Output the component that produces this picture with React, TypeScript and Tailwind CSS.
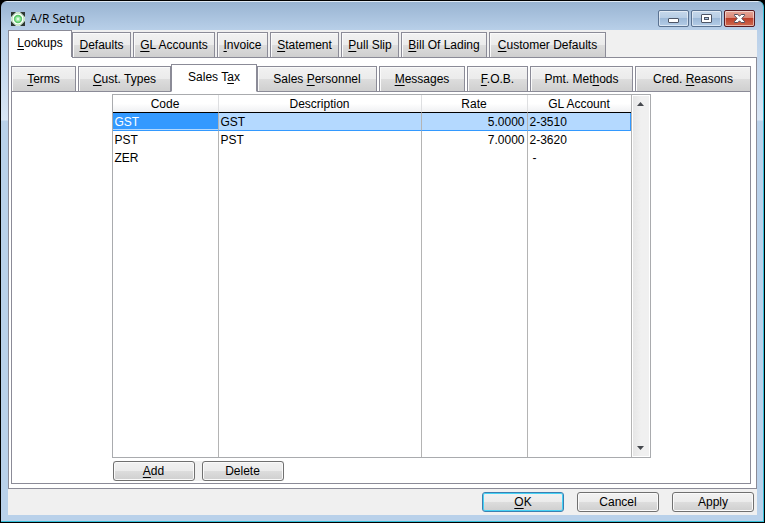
import { useState } from "react";
import type { ReactNode } from "react";
import clsx from "clsx";

interface Tab {
  label: string;
  hotkey: number;
  width: string;
}

interface TaxCode {
  code: string;
  description: string;
  rate: string;
  account: string;
}

const mainTabs: Tab[] = [
  { label: "Lookups", hotkey: 0, width: "w-[64px]" },
  { label: "Defaults", hotkey: 0, width: "w-[59px]" },
  { label: "GL Accounts", hotkey: 0, width: "w-[82px]" },
  { label: "Invoice", hotkey: 0, width: "w-[51px]" },
  { label: "Statement", hotkey: 0, width: "w-[69px]" },
  { label: "Pull Slip", hotkey: 0, width: "w-[58px]" },
  { label: "Bill Of Lading", hotkey: 0, width: "w-[86px]" },
  { label: "Customer Defaults", hotkey: 0, width: "w-[117px]" },
];

const lookupTabs: Tab[] = [
  { label: "Terms", hotkey: 0, width: "w-[65px]" },
  { label: "Cust. Types", hotkey: 0, width: "w-[93px]" },
  { label: "Sales Tax", hotkey: 7, width: "w-[86px]" },
  { label: "Sales Personnel", hotkey: 6, width: "w-[120px]" },
  { label: "Messages", hotkey: 0, width: "w-[86px]" },
  { label: "F.O.B.", hotkey: 0, width: "w-[61px]" },
  { label: "Pmt. Methods", hotkey: 8, width: "w-[103px]" },
  { label: "Cred. Reasons", hotkey: 6, width: "w-[116px]" },
];

const taxCodes: TaxCode[] = [
  { code: "GST", description: "GST", rate: "5.0000", account: "2-3510" },
  { code: "PST", description: "PST", rate: "7.0000", account: "2-3620" },
  { code: "ZER", description: "", rate: "", account: "-" },
];

const face = "bg-[linear-gradient(to_bottom,#f2f2f2,#ebebeb_50%,#dddddd_50%,#cfcfcf)]";

const Hotkey = ({ text, index }: { text: string; index: number }) => (
  <span className="whitespace-pre">
    {text.slice(0, index)}
    <span className="underline decoration-1 underline-offset-2">{text[index]}</span>
    {text.slice(index + 1)}
  </span>
);

interface TabStripProps {
  tabs: Tab[];
  active: number;
  onSelect: (index: number) => void;
  label: string;
}

const TabStrip = ({ tabs, active, onSelect, label }: TabStripProps) => (
  <div role="tablist" aria-label={label} className="flex h-7 items-end shadow-[inset_0_-1px_0_#8b8b97]">
    {tabs.map((tab, i) => (
      <button
        key={tab.label}
        type="button"
        role="tab"
        aria-selected={i === active}
        onClick={() => onSelect(i)}
        className={clsx(
          "shrink-0 border border-[#8b8b97] text-center",
          tab.width,
          i === active ? "h-7 border-b-white bg-white pb-[2px]" : "h-[26px] shadow-[inset_1px_1px_0_#fafafa]",
          i !== active && face,
          i !== active && i !== active - 1 && i < tabs.length - 1 && "mr-[2px]",
        )}
      >
        <Hotkey text={tab.label} index={tab.hotkey} />
      </button>
    ))}
  </div>
);

interface PushButtonProps {
  children: ReactNode;
  isDefault?: boolean;
}

const PushButton = ({ children, isDefault = false }: PushButtonProps) => (
  <button
    type="button"
    className={clsx(
      "h-5 w-[82px] rounded-[3px] border",
      face,
      isDefault
        ? "border-[#3c7fb1] shadow-[inset_0_0_0_1px_#46d2f5]"
        : "border-[#707070] shadow-[inset_0_0_0_1px_#fafafa]",
    )}
  >
    {children}
  </button>
);

const AppIcon = () => (
  <svg viewBox="0 0 16 16" className="size-4" aria-hidden="true">
    <rect x="1" y="1" width="14" height="14" fill="#dfeee0" />
    <path d="M1 6V1H6L1 6ZM10 1H15V6L10 1ZM1 10V15H6L1 10ZM15 10V15H10L15 10Z" fill="#2f3833" />
    <circle cx="8" cy="8" r="6" fill="#fff" stroke="#b5dcb8" strokeWidth="1" />
    <circle cx="8" cy="8" r="3.4" fill="#a8eab0" stroke="#5ccb6c" strokeWidth="1.6" />
    <circle cx="8" cy="8" r="1.2" fill="#e4fbe6" />
  </svg>
);

const captionButton =
  "flex h-[17px] w-[31px] items-center justify-center rounded-[2px] border shadow-[inset_0_0_0_1px_rgba(255,255,255,0.5)]";
const captionBlue =
  "border-[#5a7291] bg-[linear-gradient(to_bottom,#c6d8eb,#b6cce4_50%,#9db9d8_50%,#b4cde7)]";

const TitleBar = () => (
  <header className="flex h-[29px] items-center justify-between pt-[6px] pr-2 pl-[9px]">
    <div className="flex items-center gap-1">
      <AppIcon />
      <h1 className="font-['Open_Sans','Noto_Sans',sans-serif] text-xs text-black">A/R Setup</h1>
    </div>
    <div className="flex gap-[2px]">
      <button type="button" aria-label="Minimize" className={clsx(captionButton, captionBlue)}>
        <svg viewBox="0 0 11 5" className="mt-1 h-[5px] w-[11px]">
          <rect x="0.5" y="0.5" width="10" height="4" rx="0.5" fill="#fff" stroke="#4d5566" />
        </svg>
      </button>
      <button type="button" aria-label="Maximize" className={clsx(captionButton, captionBlue)}>
        <svg viewBox="0 0 11 9" className="h-[9px] w-[11px]">
          <rect x="0.5" y="0.5" width="10" height="8" rx="0.5" fill="#fff" stroke="#4d5566" />
          <rect x="3.5" y="3.5" width="4" height="2" fill="#a9c3df" stroke="#4d5566" />
        </svg>
      </button>
      <button
        type="button"
        aria-label="Close"
        className={clsx(
          captionButton,
          "border-[#571a22] bg-[linear-gradient(to_bottom,#e5a698,#d98573_50%,#bd3f2a_50%,#cf6a50)]",
        )}
      >
        <svg viewBox="0 0 13 11" className="h-[11px] w-[13px]">
          <path
            d="M1.5 1.5H4.8L6.5 3.2L8.2 1.5H11.5V2.6L8.8 5.5L11.5 8.4V9.5H8.2L6.5 7.8L4.8 9.5H1.5V8.4L4.2 5.5L1.5 2.6Z"
            fill="#fff"
            stroke="#50505f"
          />
        </svg>
      </button>
    </div>
  </header>
);

const headCell = "h-[18px] border-b border-b-black bg-linear-to-b from-white from-50% to-[#eff0f2] p-0 font-normal";
const cell = "h-[18px] p-0";
const divider = "border-r border-r-[#b4b4b4]";
const headDivider = "border-r border-r-[#dedfe1]";

const TaxTable = () => {
  const [selected, setSelected] = useState(0);

  return (
    <div className="flex min-h-[364px] w-[539px] flex-1 border border-[#a9abae] bg-white">
      <table className="w-full flex-1 table-fixed border-separate border-spacing-0 border-r border-r-[#b4b4b4]">
        <colgroup>
          <col className="w-[106px]" />
          <col />
          <col className="w-[106px]" />
          <col className="w-[103px]" />
        </colgroup>
        <thead>
          <tr>
            <th className={clsx(headCell, headDivider)}>Code</th>
            <th className={clsx(headCell, headDivider)}>Description</th>
            <th className={clsx(headCell, headDivider)}>Rate</th>
            <th className={headCell}>GL Account</th>
          </tr>
        </thead>
        <tbody>
          {taxCodes.map((tax, i) => {
            const line = i === selected && "border-b border-b-[#3399ff] bg-[#b4d9ff]";
            return (
              <tr key={tax.code} onClick={() => setSelected(i)}>
                <td
                  className={clsx(
                    cell,
                    divider,
                    "pl-[2px]",
                    i === selected && "border-b border-b-[#3399ff] bg-[#3399ff] text-white shadow-[inset_0_-1px_0_#b4d9ff]",
                  )}
                >
                  {tax.code}
                </td>
                <td className={clsx(cell, divider, "pl-[2px]", line)}>{tax.description}</td>
                <td className={clsx(cell, divider, "pr-[2px] text-right", line)}>{tax.rate}</td>
                <td
                  className={clsx(
                    cell,
                    tax.account === "-" ? "pl-[5px]" : "pl-[2px]",
                    line,
                    i === selected && "border-r border-r-[#3399ff]",
                  )}
                >
                  {tax.account}
                </td>
              </tr>
            );
          })}
          <tr aria-hidden="true">
            <td className={clsx("p-0", divider)} />
            <td className={clsx("p-0", divider)} />
            <td className={clsx("p-0", divider)} />
            <td className="p-0" />
          </tr>
        </tbody>
      </table>
      <div className="m-px flex w-4 flex-col justify-between bg-linear-to-r from-[#e6e6e6] via-[#f0f0f0] to-[#f0f0f0]">
        <button type="button" aria-label="Scroll up" className="flex h-4 items-center justify-center">
          <svg viewBox="0 0 7 4" className="h-1 w-[7px]">
            <path d="M0 4L3.5 0L7 4Z" fill="#45484d" />
          </svg>
        </button>
        <button type="button" aria-label="Scroll down" className="flex h-4 items-center justify-center">
          <svg viewBox="0 0 7 4" className="h-1 w-[7px]">
            <path d="M0 0L3.5 4L7 0Z" fill="#45484d" />
          </svg>
        </button>
      </div>
    </div>
  );
};

const App = () => {
  const [mainTab, setMainTab] = useState(0);
  const [lookupTab, setLookupTab] = useState(2);

  return (
    <div className="flex min-h-screen bg-black font-['Liberation_Sans',Arial,sans-serif] text-xs text-black">
      <div className="m-px flex flex-1 flex-col rounded-t-md border-r border-b border-[#35bfd8] bg-[linear-gradient(to_bottom,#dfe9f4_0px,#dfe9f4_1px,#99b4d2_1px,#b9d0e9_30px,#d9e6f5_119px,#b9d1ea_120px)]">
        <TitleBar />
        <main className="mr-[6px] mb-[6px] ml-[7px] flex flex-1 flex-col bg-[#f0f0f0]">
          <TabStrip tabs={mainTabs} active={mainTab} onSelect={setMainTab} label="Setup sections" />
          <section className="-mt-px flex flex-1 flex-col">
            <div className="flex flex-1 flex-col border border-t-0 border-[#8b8b97] bg-white pr-[5px] pb-1 pl-[2px]">
              <div className="-mr-[5px] ml-[61px] h-px bg-[#8b8b97]" />
              <div className="pt-[6px]">
                <TabStrip tabs={lookupTabs} active={lookupTab} onSelect={setLookupTab} label="Lookup tables" />
              </div>
              <div className="flex flex-1 flex-col items-center border border-t-0 border-[#8b8b97] px-2 pt-[2px] pb-[2px]">
                <TaxTable />
                <div className="mt-[3px] flex w-[537px]">
                  <div className="flex gap-[7px] bg-[#f0f0f0]">
                    <PushButton>
                      <Hotkey text="Add" index={0} />
                    </PushButton>
                    <PushButton>Delete</PushButton>
                  </div>
                </div>
              </div>
            </div>
          </section>
          <footer className="flex justify-end gap-[13px] pt-[3px] pr-[3px] pb-[3px]">
            <PushButton isDefault>
              <Hotkey text="OK" index={0} />
            </PushButton>
            <PushButton>Cancel</PushButton>
            <PushButton>Apply</PushButton>
          </footer>
        </main>
      </div>
    </div>
  );
};

export default App;
